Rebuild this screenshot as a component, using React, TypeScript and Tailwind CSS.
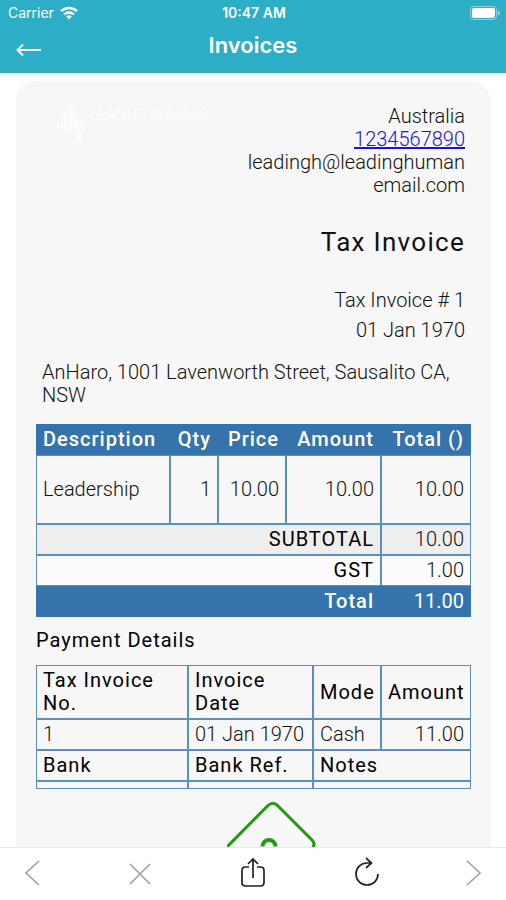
import type { ReactNode } from 'react';
import clsx from 'clsx';

const contact = {
  country: 'Australia',
  phone: '1234567890',
  email: ['leadingh@leadinghuman', 'email.com'],
};

const items = [
  { description: 'Leadership', qty: '1', price: '10.00', amount: '10.00', total: '10.00' },
];

const payments = [{ no: '1', date: '01 Jan 1970', mode: 'Cash', amount: '11.00' }];

type CellProps = {
  children?: ReactNode;
  heading?: boolean;
  filled?: boolean;
  right?: boolean;
  tall?: boolean;
  colSpan?: number;
};

function Cell({ children, heading, filled, right, tall, colSpan }: CellProps) {
  const Tag = heading ? 'th' : 'td';
  return (
    <Tag
      colSpan={colSpan}
      className={clsx(
        'border px-1.5',
        tall ? 'py-[22px]' : 'py-[3px]',
        heading && (filled ? 'font-medium' : 'font-normal text-black'),
        heading && 'tracking-wider',
        filled ? 'border-[#3573ad] bg-[#3573ad] text-white' : 'border-[#5a8fc3]',
        filled && !heading && 'font-normal',
        right ? 'text-right' : 'text-left',
      )}
    >
      {children}
    </Tag>
  );
}

function StatusBar() {
  return (
    <div className="grid h-[26px] grid-cols-3 items-center pr-1.5 pl-2 text-sm">
      <span className="flex items-center gap-1.5">
        Carrier
        <svg width="18" height="14" viewBox="0 0 18 14" fill="none" stroke="currentColor" strokeWidth="2.4">
          <path d="M1 5.2a11.5 11.5 0 0 1 16 0" />
          <path d="M4 8.5a7.2 7.2 0 0 1 10 0" />
          <path d="M9 13.6l-2.8-3a4 4 0 0 1 5.6 0z" fill="currentColor" stroke="none" />
        </svg>
      </span>
      <span className="text-center font-semibold">10:47 AM</span>
      <svg className="justify-self-end" width="30" height="14" viewBox="0 0 30 14" fill="none">
        <rect x="0.5" y="0.5" width="26" height="13" rx="3" stroke="white" strokeOpacity="0.45" />
        <rect x="2" y="2" width="23" height="10" rx="2" fill="white" />
        <path d="M28 4.5v5c1-.4 1.7-1.4 1.7-2.5S29 4.900 28 4.500z" fill="white" fillOpacity="0.6" />
      </svg>
    </div>
  );
}

function Logo() {
  return (
    <div className="flex items-start gap-1.5 pl-4 text-white">
      <svg width="32" height="42" viewBox="0 0 32 42" fill="none" stroke="currentColor" strokeWidth="1.600" strokeLinecap="round">
        <path d="M1 21h2M6 19v4M10 12v12M13 8v18M16 5v24M19 1v26M22 6v20M25 14v22M28 24v16M31 19v6" />
      </svg>
      <span className="text-sm">LEADING HUMANS</span>
    </div>
  );
}

function InvoiceTable() {
  return (
    <table className="w-full table-fixed border-separate border-spacing-0">
      <colgroup>
        <col />
        <col className="w-12" />
        <col className="w-[68px]" />
        <col className="w-[95px]" />
        <col className="w-[90px]" />
      </colgroup>
      <thead>
        <tr>
          <Cell heading filled>Description</Cell>
          <Cell heading filled right>Qty</Cell>
          <Cell heading filled right>Price</Cell>
          <Cell heading filled right>Amount</Cell>
          <Cell heading filled right>Total ()</Cell>
        </tr>
      </thead>
      <tbody>
        {items.map((item) => (
          <tr key={item.description}>
            <Cell tall>{item.description}</Cell>
            <Cell tall right>{item.qty}</Cell>
            <Cell tall right>{item.price}</Cell>
            <Cell tall right>{item.amount}</Cell>
            <Cell tall right>{item.total}</Cell>
          </tr>
        ))}
        <tr className="bg-[#eeeeee]">
          <Cell heading right colSpan={4}>SUBTOTAL</Cell>
          <Cell right>10.00</Cell>
        </tr>
        <tr className="bg-[#fbfbfb]">
          <Cell heading right colSpan={4}>GST</Cell>
          <Cell right>1.00</Cell>
        </tr>
        <tr>
          <Cell heading filled right colSpan={4}>Total</Cell>
          <Cell filled right>11.00</Cell>
        </tr>
      </tbody>
    </table>
  );
}

function PaymentTable() {
  return (
    <table className="w-full table-fixed border-separate border-spacing-0">
      <colgroup>
        <col />
        <col className="w-[125px]" />
        <col className="w-[68px]" />
        <col className="w-[90px]" />
      </colgroup>
      <tbody>
        <tr>
          <Cell heading>Tax Invoice No.</Cell>
          <Cell heading>Invoice Date</Cell>
          <Cell heading>Mode</Cell>
          <Cell heading right>Amount</Cell>
        </tr>
        {payments.map((payment) => (
          <tr key={payment.no}>
            <Cell>{payment.no}</Cell>
            <Cell>{payment.date}</Cell>
            <Cell>{payment.mode}</Cell>
            <Cell right>{payment.amount}</Cell>
          </tr>
        ))}
        <tr>
          <Cell heading>Bank</Cell>
          <Cell heading>Bank Ref.</Cell>
          <Cell heading colSpan={2}>Notes</Cell>
        </tr>
        <tr>
          <Cell />
          <Cell />
          <Cell colSpan={2} />
        </tr>
      </tbody>
    </table>
  );
}

type ToolbarButtonProps = { label: string; disabled?: boolean; wide?: boolean; children: ReactNode };

function ToolbarButton({ label, disabled, wide, children }: ToolbarButtonProps) {
  return (
    <button
      type="button"
      aria-label={label}
      disabled={disabled}
      className={clsx('py-0.5', wide ? 'px-2' : 'px-0.5', disabled ? 'text-[#a3a3a3]' : 'text-[#222222]')}
    >
      <svg width="32" height="32" viewBox="0 0 32 32" fill="none" stroke="currentColor" strokeWidth="1.7">
        {children}
      </svg>
    </button>
  );
}

export default function App() {
  return (
    <div className="flex h-screen flex-col overflow-hidden bg-white font-['Roboto',sans-serif] text-xl leading-[23px] font-light text-[#111111]">
      <header className="bg-[#2baec6] font-['Inter',sans-serif] font-normal text-white">
        <StatusBar />
        <div className="grid h-[47px] grid-cols-[1fr_auto_1fr] items-start px-4">
          <button type="button" aria-label="Back" className="justify-self-start pt-4">
            <svg width="26" height="16" viewBox="0 0 26 16" fill="none" stroke="currentColor" strokeWidth="1.8">
              <path d="M25 8H1.500M7 2.500L1.500 8L7 13.500" />
            </svg>
          </button>
          <h1 className="pt-2 text-[22px] font-semibold">Invoices</h1>
        </div>
      </header>

      <main className="min-h-0 flex-1 overflow-hidden pt-2 pr-[15px] pl-4">
        <article className="h-full overflow-hidden rounded-t-[20px] bg-[#f7f7f7] px-5 pt-6">
          <div className="flex justify-between">
            <Logo />
            <address className="flex flex-col items-end pr-1.5 not-italic">
              <span>{contact.country}</span>
              <a href={`tel:${contact.phone}`} className="text-[#1a10dc] underline">{contact.phone}</a>
              {contact.email.map((part) => (
                <span key={part}>{part}</span>
              ))}
            </address>
          </div>

          <div className="pt-[29px] pr-1.5 text-right">
            <h2 className="text-[26px] leading-8 font-normal tracking-wider">Tax Invoice</h2>
            <p className="pt-[27px] leading-[30px]">
              Tax Invoice # 1
              <br />
              01 Jan 1970
            </p>
          </div>

          <p className="px-1.5 pt-4 pb-[17px]">AnHaro, 1001 Lavenworth Street, Sausalito CA, NSW</p>

          <InvoiceTable />
          <h3 className="pt-3 pb-[13px] font-normal tracking-wider text-black">Payment Details</h3>
          <PaymentTable />

          <div className="flex justify-center pt-3 pl-9">
            <svg width="90" height="90" viewBox="0 0 90 90" fill="none" stroke="#23990f" strokeWidth="3">
              <path d="M41 4.500Q46 0 50.500 4.500L85 39Q89 43 85 48L50 84Q46 88 42 84L-4 56Q-6 52 -3 49Z" />
              <path d="M35.500 45.500a6.500 6.500 0 0 1 13 0" strokeWidth="4" />
            </svg>
          </div>
        </article>
      </main>

      <nav className="flex justify-between border-t border-[#e8e8e8] bg-white px-[14px] pt-1.5 pb-2.5">
        <ToolbarButton label="Back" disabled>
          <path d="M23 5L10 17l13 12" />
        </ToolbarButton>
        <ToolbarButton label="Stop" disabled wide>
          <path d="M6 8l20 20M26 8L6 28" />
        </ToolbarButton>
        <ToolbarButton label="Share" wide>
          <path d="M12 11H8.500Q5 11 5 14.500V26.500Q5 30 8.500 30H23.500Q27 30 27 26.500V14.500Q27 11 23.500 11H20M16 22V3M11 8l5-5 5 5" />
        </ToolbarButton>
        <ToolbarButton label="Reload" wide>
          <path d="M27 18a11 11 0 1 1-11-11h4M15 2l5.500 5-5.500 5" />
        </ToolbarButton>
        <ToolbarButton label="Forward" disabled>
          <path d="M9 5l13 12-13 12" />
        </ToolbarButton>
      </nav>
    </div>
  );
}
